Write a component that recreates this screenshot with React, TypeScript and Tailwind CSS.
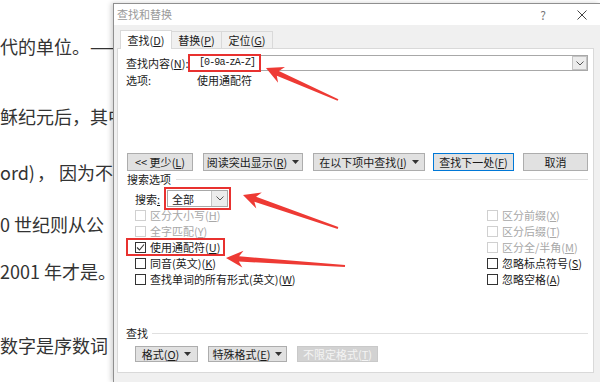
import React from "react"

function Acc({ k }: { k: string }) {
  return (
    <span>
      (<span className="underline">{k}</span>)
    </span>
  )
}

function Caret() {
  return (
    <svg width="7" height="4" viewBox="0 0 7 4" className="ml-[5px]">
      <path d="M0 0 L7 0 L3.5 4 Z" fill="#333" />
    </svg>
  )
}

function Chevron() {
  return (
    <svg width="8" height="5" viewBox="0 0 8 5">
      <path d="M0.5 0.5 L4 4 L7.5 0.5" fill="none" stroke="#555" strokeWidth="1" />
    </svg>
  )
}

function Btn({ w, children, primary, disabled }: { w: string; children: React.ReactNode; primary?: boolean; disabled?: boolean }) {
  return (
    <div
      className={
        "flex h-full items-center justify-center border text-[11px] " +
        w +
        (disabled
          ? " border-[#c9c9c9] bg-[#d2d2d2] text-[#f4f4f4]"
          : primary
            ? " border-[#0078d7] bg-[#e1e1e1] text-[#1a1a1a]"
            : " border-[#adadad] bg-[#e1e1e1] text-[#1a1a1a]")
      }
    >
      {children}
    </div>
  )
}

function Check({ label, k, checked, disabled }: { label: string; k: string; checked?: boolean; disabled?: boolean }) {
  return (
    <div className={"flex h-[16px] items-center gap-[4px] text-[11px] " + (disabled ? "text-[#a8a8a8]" : "text-[#1a1a1a]")}>
      <span className={"flex h-[11px] w-[11px] items-center justify-center border bg-white " + (disabled ? "border-[#d0d0d0]" : "border-[#333]")}>
        {checked && (
          <svg width="9" height="9" viewBox="0 0 9 9">
            <path d="M1 4.5 L3.5 7 L8 1.5" fill="none" stroke="#333" strokeWidth="1.1" />
          </svg>
        )}
      </span>
      <span>
        {label}
        <Acc k={k} />
      </span>
    </div>
  )
}

function arrow(tx: number, ty: number, ex: number, ey: number) {
  const dx = ex - tx
  const dy = ey - ty
  const len = Math.hypot(dx, dy)
  const ux = dx / len
  const uy = dy / len
  const nx = -uy
  const ny = ux
  const L = 17
  const W = 8.5
  const w1 = 2.6
  const w2 = 0.9
  const p = (a: number, b: number) => `${a.toFixed(1)},${b.toFixed(1)}`
  return [
    p(tx, ty),
    p(tx + ux * L + nx * W, ty + uy * L + ny * W),
    p(tx + ux * (L - 4) + nx * w1, ty + uy * (L - 4) + ny * w1),
    p(ex + nx * w2, ey + ny * w2),
    p(ex - nx * w2, ey - ny * w2),
    p(tx + ux * (L - 4) - nx * w1, ty + uy * (L - 4) - ny * w1),
    p(tx + ux * L - nx * W, ty + uy * L - ny * W),
  ].join(" ")
}

function Dialog() {
  return (
    <div className="mt-[3px] flex w-[487px] shrink-0 flex-col border-l border-t border-[#8f8f8f] shadow-[-2px_0_5px_rgba(0,0,0,0.18)]">
      {/* title bar */}
      <div className="flex h-[21px] items-center bg-white pl-[3px] text-[11px] text-[#9a9a9a]">
        <span>查找和替换</span>
        <span className="ml-auto w-[12px] text-center text-[12px] text-[#777]">?</span>
        <span className="ml-[28px] mr-[13px] flex">
          <svg width="10" height="10" viewBox="0 0 10 10">
            <path d="M0.5 0.5 L9.5 9.5 M9.5 0.5 L0.5 9.5" stroke="#444" strokeWidth="1" />
          </svg>
        </span>
      </div>

      <div className="flex flex-1 flex-col bg-[#f0f0f0] pb-[9px] pl-[3px] pr-[6px]">
        {/* tabs */}
        <div className="flex h-[23px] items-end pl-[3px] text-[11px] text-[#1a1a1a]">
          <div className="relative z-10 -mb-px flex h-[19px] w-[52px] items-center justify-center border border-b-0 border-[#d9d9d9] bg-white">
            查找<Acc k="D" />
          </div>
          <div className="flex h-[17px] w-[50px] items-center justify-center border-r border-t border-[#d9d9d9]">
            替换<Acc k="P" />
          </div>
          <div className="flex h-[17px] w-[51px] items-center justify-center border-r border-t border-[#d9d9d9]">
            定位<Acc k="G" />
          </div>
        </div>

        {/* panel */}
        <div className="flex flex-1 flex-col border border-[#d9d9d9] bg-white text-[11px] leading-[14px] text-[#1a1a1a]">
          <div className="mt-[6px] flex h-[16px] items-center pl-[8px] pr-[5px]">
            <span className="w-[63px]">
              查找内容<Acc k="N" />:
            </span>
            <div className="flex h-full flex-1 items-stretch border border-[#a8a8a8] bg-white">
              <span className="flex w-[69px] items-center pl-[9px] font-['Liberation_Mono',monospace] text-[10px] tracking-[-0.9px] text-[#222] outline-2 outline-[#e8312f]">
                [0-9a-zA-Z]
              </span>
              <span className="ml-auto flex w-[15px] items-center justify-center border border-[#c4c4c4] bg-[#ececec]">
                <Chevron />
              </span>
            </div>
          </div>

          <div className="mt-[1px] flex h-[16px] items-center pl-[8px]">
            <span className="w-[71px]">选项:</span>
            <span>使用通配符</span>
          </div>

          <div className="mt-[65px] flex h-[18px] pl-[9px]">
            <Btn w="w-[66px]">
              &lt;&lt; 更少<Acc k="L" />
            </Btn>
            <div className="ml-[10px] h-full">
              <Btn w="w-[100px]">
                阅读突出显示<Acc k="R" />
                <Caret />
              </Btn>
            </div>
            <div className="ml-[10px] h-full">
              <Btn w="w-[112px]">
                在以下项中查找<Acc k="I" />
                <Caret />
              </Btn>
            </div>
            <div className="ml-[8px] h-full">
              <Btn w="w-[81px]" primary>
                查找下一处<Acc k="F" />
              </Btn>
            </div>
            <div className="ml-[9px] h-full">
              <Btn w="w-[65px]">取消</Btn>
            </div>
          </div>

          <div className="flex h-[16px] items-center pl-[9px] pr-[5px]">
            <span>搜索选项</span>
            <span className="ml-[5px] h-px flex-1 bg-[#e0e0e0]" />
          </div>

          <div className="mt-[3px] flex h-[17px] items-center pl-[17px]">
            <span className="w-[32px]">
              搜索<span className="underline">:</span>
            </span>
            <div className="flex h-full w-[61px] border border-[#a8a8a8] bg-white outline-2 outline-offset-1 outline-[#e8312f]">
              <span className="flex flex-1 items-center pl-[4px]">全部</span>
              <span className="flex w-[16px] items-center justify-center border-l border-[#c4c4c4] bg-[#ececec]">
                <Chevron />
              </span>
            </div>
          </div>

          <div className="grid grid-cols-[352px_1fr] pl-[17px]">
            <Check label="区分大小写" k="H" disabled />
            <Check label="区分前缀" k="X" disabled />
            <Check label="全字匹配" k="Y" disabled />
            <Check label="区分后缀" k="T" disabled />
            <div className="flex">
              <div className="-ml-[8px] flex pl-[8px] pr-[4px] outline-2 -outline-offset-1 outline-[#e8312f]">
                <Check label="使用通配符" k="U" checked />
              </div>
            </div>
            <Check label="区分全/半角" k="M" disabled />
            <Check label="同音(英文)" k="K" />
            <Check label="忽略标点符号" k="S" />
            <Check label="查找单词的所有形式(英文)" k="W" />
            <Check label="忽略空格" k="A" />
          </div>

          <div className="mt-[38px] flex h-[16px] items-center pl-[8px] pr-[5px]">
            <span>查找</span>
            <span className="ml-[4px] h-px flex-1 bg-[#e0e0e0]" />
          </div>

          <div className="mt-[5px] flex h-[16px] gap-[10px] pl-[17px]">
            <Btn w="w-[63px]">
              格式<Acc k="O" />
              <Caret />
            </Btn>
            <Btn w="w-[79px]">
              特殊格式<Acc k="E" />
              <Caret />
            </Btn>
            <Btn w="w-[81px]" disabled>
              不限定格式<Acc k="T" />
            </Btn>
          </div>
        </div>
      </div>
    </div>
  )
}

export default function App() {
  return (
    <div className="relative flex h-[382px] w-[600px] overflow-hidden bg-white font-['Noto_Sans_CJK_SC',sans-serif]">
      <div className="w-[113px] shrink-0 overflow-hidden whitespace-nowrap text-[18px] leading-[24px] text-[#333]">
        <div className="mt-[34px]">代的单位。——</div>
        <div className="mt-[46px]">稣纪元后，其中</div>
        <div className="mt-[32px]">
          ord)<span className="ml-[2px]">，</span>
          <span className="ml-[4px]">因为不</span>
        </div>
        <div className="mt-[28px]">0 世纪则从公</div>
        <div className="mt-[23px]">2001 年才是。</div>
        <div className="mt-[50px]">数字是序数词</div>
      </div>

      <Dialog />

      <svg className="pointer-events-none absolute inset-0" width="600" height="382" viewBox="0 0 600 382">
        <polygon points={arrow(266, 68, 338, 100)} fill="#ee3a34" />
        <polygon points={arrow(243, 195, 338, 228)} fill="#ee3a34" />
        <polygon points={arrow(226, 258, 345, 266)} fill="#ee3a34" />
      </svg>
    </div>
  )
}
